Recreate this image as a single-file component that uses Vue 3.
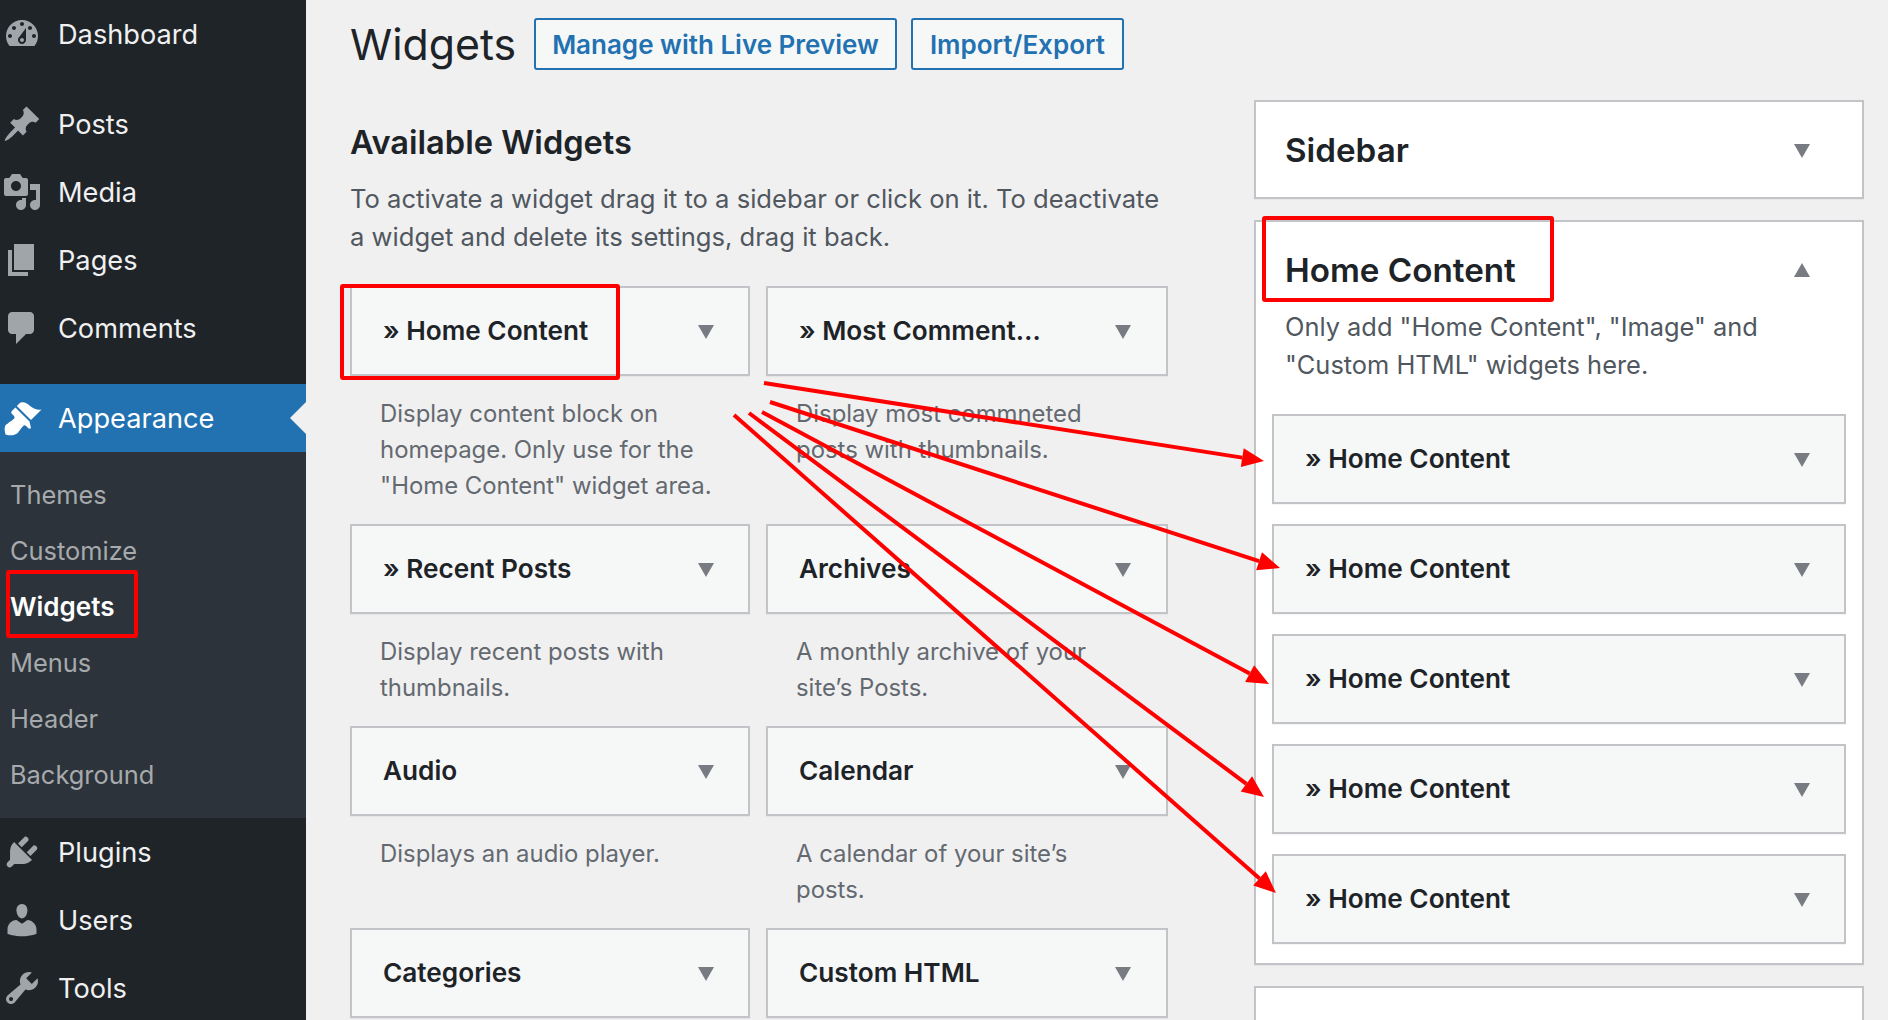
<script setup>
const ICONS = {
  dashboard: 'M3.76 16h12.48c1.1-1.37 1.76-3.11 1.76-5 0-4.42-3.58-8-8-8s-8 3.58-8 8c0 1.89.66 3.63 1.76 5zM10 4c.55 0 1 .45 1 1s-.45 1-1 1-1-.45-1-1 .45-1 1-1zM6 6c.55 0 1 .45 1 1s-.45 1-1 1-1-.45-1-1 .45-1 1-1zm8 0c.55 0 1 .45 1 1s-.45 1-1 1-1-.45-1-1 .45-1 1-1zm-5.37 5.55L12 7v6c0 1.1-.9 2-2 2s-2-.9-2-2c0-.57.24-1.08.63-1.45zM4 10c.55 0 1 .45 1 1s-.45 1-1 1-1-.45-1-1 .45-1 1-1zm12 0c.55 0 1 .45 1 1s-.45 1-1 1-1-.45-1-1 .45-1 1-1zm-5 3c0-.55-.45-1-1-1s-1 .45-1 1 .45 1 1 1 1-.45 1-1z',
  post: 'M10.44 3.02l1.82-1.82 6.36 6.35-1.83 1.82c-1.05-.68-2.48-.57-3.41.36l-.75.75c-.92.93-1.04 2.35-.35 3.41l-1.83 1.82-2.41-2.41-2.8 2.79c-.42.42-3.38 2.71-3.8 2.29s1.86-3.39 2.28-3.81l2.79-2.79L4.1 9.36l1.83-1.82c1.05.69 2.48.57 3.4-.36l.75-.75c.93-.92 1.05-2.35.36-3.41z',
  media: 'M13 11V4c0-.55-.45-1-1-1h-1.67L9 1H5L3.67 3H2c-.55 0-1 .45-1 1v7c0 .55.45 1 1 1h10c.55 0 1-.45 1-1zM7 4.5c1.38 0 2.5 1.12 2.5 2.5S8.38 9.5 7 9.5 4.5 8.38 4.5 7 5.62 4.5 7 4.5zM14 6h5v10.5c0 1.38-1.12 2.5-2.5 2.5S14 17.88 14 16.5s1.12-2.5 2.5-2.5c.17 0 .34.02.5.05V9h-3V6zm-4 8.05V13h2v3.5c0 1.38-1.12 2.5-2.5 2.5S7 17.88 7 16.5 8.12 14 9.5 14c.17 0 .34.02.5.05z',
  page: 'M6 15V2h10v13H6zm-1 1h8v2H3V5h2v11z',
  comments: 'M5 2h9c1.1 0 2 .9 2 2v7c0 1.1-.9 2-2 2h-2l-5 5v-5H5c-1.1 0-2-.9-2-2V4c0-1.1.9-2 2-2z',
  appearance: 'M14.48 11.06L7.41 3.99l1.5-1.5c.5-.56 2.3-.47 3.51.32 1.21.8 1.43 1.28 2.91 2.1 1.18.64 2.45 1.26 4.45.85zm-.71.71L6.7 4.7 4.93 6.47c-.39.39-.39 1.02 0 1.41l1.06 1.06c.39.39.39 1.03 0 1.42-.6.6-1.43 1.11-2.21 1.69-.35.26-.7.53-1.01.84C1.43 13.23.91 15.24 1.76 18.2c2.96.85 4.97.33 6.31-1.01.31-.31.58-.66.84-1.01.58-.78 1.09-1.61 1.69-2.21.39-.39 1.03-.39 1.42 0l1.06 1.06c.39.39 1.02.39 1.41 0z',
  plugins: 'M13.11 4.36L9.87 7.6 8 5.73l3.24-3.24c.35-.34 1.05-.2 1.56.32.52.51.66 1.21.31 1.55zm-8 1.77l.91-1.12 9.01 9.01-1.19.84c-.71.71-2.63 1.16-3.82 1.16H6.14L4.9 17.26c-.59.59-1.54.59-2.12 0-.59-.58-.59-1.53 0-2.12l1.24-1.24v-3.88c0-1.13.4-3.19 1.09-3.89zm7.26 3.97l3.24-3.24c.34-.35 1.04-.21 1.55.31.52.51.66 1.21.31 1.55l-3.24 3.25z',
  users: 'M10 9.25c-2.27 0-2.73-3.44-2.73-3.44C7 4.02 7.82 2 9.97 2c2.16 0 2.98 2.02 2.71 3.81 0 0-.41 3.44-2.68 3.44zm0 2.57L12.72 10c2.39 0 4.52 2.33 4.52 4.53v2.49s-3.65 1.13-7.24 1.13c-3.65 0-7.24-1.13-7.24-1.13v-2.49c0-2.25 1.94-4.48 4.47-4.48z',
  tools: 'M16.68 9.77c-1.34 1.34-3.3 1.67-4.95.99l-5.41 6.52c-.99.99-2.59.99-3.58 0s-.99-2.59 0-3.57l6.52-5.42c-.68-1.65-.35-3.61.99-4.95 1.28-1.28 3.12-1.62 4.72-1.06l-2.89 2.89 2.82 2.82 2.86-2.87c.53 1.58.18 3.39-1.08 4.65zM3.81 16.21c.4.39 1.04.39 1.43 0 .4-.4.4-1.04 0-1.43-.39-.4-1.03-.4-1.43 0-.39.39-.39 1.03 0 1.43z',
}

const MENU_TOP = [
  { label: 'Dashboard', icon: 'dashboard', sepAfter: true },
  { label: 'Posts', icon: 'post' },
  { label: 'Media', icon: 'media' },
  { label: 'Pages', icon: 'page' },
  { label: 'Comments', icon: 'comments', sepAfter: true },
]
const SUBMENU = ['Themes', 'Customize', 'Widgets', 'Menus', 'Header', 'Background']
const MENU_BOTTOM = [
  { label: 'Plugins', icon: 'plugins' },
  { label: 'Users', icon: 'users' },
  { label: 'Tools', icon: 'tools' },
]

const AVAILABLE = [
  { title: '» Home Content', desc: 'Display content block on homepage. Only use for the "Home Content" widget area.' },
  { title: '» Most Comment…', desc: 'Display most commneted posts with thumbnails.' },
  { title: '» Recent Posts', desc: 'Display recent posts with thumbnails.' },
  { title: 'Archives', desc: 'A monthly archive of your site’s Posts.' },
  { title: 'Audio', desc: 'Displays an audio player.' },
  { title: 'Calendar', desc: 'A calendar of your site’s posts.' },
  { title: 'Categories', desc: '' },
  { title: 'Custom HTML', desc: '' },
]

const HOME_WIDGETS = [1, 2, 3, 4, 5]

const BOXES = [
  { x: 8, y: 572, w: 128, h: 64 },
  { x: 342, y: 286, w: 276, h: 92 },
  { x: 1264, y: 218, w: 288, h: 82 },
]

// start and tip of each red arrow, the head is worked out from the direction
const ARROWS = [
  [764, 383, 1264, 461],
  [770, 402, 1280, 568],
  [762, 412, 1269, 684],
  [749, 413, 1264, 797],
  [734, 415, 1276, 893],
].map(([x1, y1, x2, y2]) => {
  const len = Math.hypot(x2 - x1, y2 - y1)
  const ux = (x2 - x1) / len
  const uy = (y2 - y1) / len
  const bx = x2 - ux * 22
  const by = y2 - uy * 22
  const head = [
    [x2, y2],
    [bx - uy * 9.5, by + ux * 9.5],
    [bx + uy * 9.5, by - ux * 9.5],
  ]
  return { x1, y1, x2: bx, y2: by, head: head.map((p) => p.join(',')).join(' ') }
})
</script>

<template>
  <div class="page">
    <aside class="adminmenu">
      <template v-for="item in MENU_TOP" :key="item.label">
        <div class="menu-item" :class="{ 'has-sep': item.sepAfter }">
          <svg class="menu-icon" viewBox="0 0 20 20"><path :d="ICONS[item.icon]" fill-rule="evenodd" /></svg>
          <span>{{ item.label }}</span>
        </div>
      </template>
      <div class="menu-item current">
        <svg class="menu-icon" viewBox="0 0 20 20"><path :d="ICONS.appearance" /></svg>
        <span>Appearance</span>
        <i class="notch"></i>
      </div>
      <ul class="submenu">
        <li v-for="sub in SUBMENU" :key="sub" :class="{ active: sub === 'Widgets' }">{{ sub }}</li>
      </ul>
      <div v-for="item in MENU_BOTTOM" :key="item.label" class="menu-item">
        <svg class="menu-icon" viewBox="0 0 20 20"><path :d="ICONS[item.icon]" /></svg>
        <span>{{ item.label }}</span>
      </div>
    </aside>

    <main class="content">
      <section class="available">
        <header class="page-head">
          <h1>Widgets</h1>
          <a class="btn">Manage with Live Preview</a>
          <a class="btn">Import/Export</a>
        </header>
        <h2>Available Widgets</h2>
        <p class="intro">To activate a widget drag it to a sidebar or click on it. To deactivate a widget and delete its settings, drag it back.</p>
        <div class="widget-grid">
          <div v-for="w in AVAILABLE" :key="w.title" class="widget-cell">
            <div class="widget">
              <span>{{ w.title }}</span>
              <i class="arrow"></i>
            </div>
            <p v-if="w.desc" class="widget-desc">{{ w.desc }}</p>
          </div>
        </div>
      </section>

      <section class="areas">
        <div class="area closed">
          <h3>Sidebar</h3>
          <i class="arrow"></i>
        </div>
        <div class="area open">
          <div class="area-head">
            <h3>Home Content</h3>
            <i class="arrow up"></i>
          </div>
          <p class="area-desc">Only add "Home Content", "Image" and "Custom HTML" widgets here.</p>
          <div class="area-widgets">
            <div v-for="n in HOME_WIDGETS" :key="n" class="widget wide">
              <span>» Home Content</span>
              <i class="arrow"></i>
            </div>
          </div>
        </div>
        <div class="area closed"></div>
      </section>
    </main>

    <svg class="marks" width="1888" height="1020" viewBox="0 0 1888 1020">
      <rect v-for="b in BOXES" :key="b.x" :x="b.x" :y="b.y" :width="b.w" :height="b.h" rx="1" fill="none" stroke="#ff0000" stroke-width="4" />
      <g v-for="a in ARROWS" :key="a.y1">
        <line :x1="a.x1" :y1="a.y1" :x2="a.x2" :y2="a.y2" stroke="#ff0000" stroke-width="4" />
        <polygon :points="a.head" fill="#ff0000" />
      </g>
    </svg>
  </div>
</template>

<style>
html, body {
  margin: 0;
  overflow: hidden;
}
</style>

<style scoped>
.page {
  position: relative;
  display: flex;
  width: 1888px;
  height: 1020px;
  overflow: hidden;
  background: #f0f0f1;
  font-family: Inter, "Noto Sans", sans-serif;
  color: #1d2327;
}

.adminmenu {
  width: 306px;
  flex-shrink: 0;
  background: #1f2429;
}

.menu-item {
  position: relative;
  display: flex;
  align-items: center;
  height: 68px;
  padding-left: 2px;
  font-size: 27.2px;
  color: #f0f0f1;
}

.menu-item.has-sep {
  margin-bottom: 22px;
}

.menu-icon {
  width: 40px;
  height: 40px;
  margin-right: 16px;
  fill: #a0a5aa;
  flex-shrink: 0;
}

.menu-item.current {
  background: #2271b1;
  color: #fff;
}

.menu-item.current .menu-icon {
  fill: #fff;
}

.notch {
  position: absolute;
  right: 0;
  top: 18px;
  border: 16px solid transparent;
  border-left-width: 0;
  border-right-color: #f0f0f1;
}

.submenu {
  margin: 0;
  padding: 25px 0 0 10px;
  height: 366px;
  box-sizing: border-box;
  list-style: none;
  background: #2c333a;
  display: flex;
  flex-direction: column;
  gap: 20px;
  font-size: 25.4px;
  color: #a7aaad;
}

.submenu li {
  height: 36px;
  line-height: 36px;
}

.submenu li.active {
  color: #fff;
  font-size: 26px;
  font-weight: 600;
}

.content {
  flex: 1;
  display: flex;
  gap: 86px;
  padding-left: 44px;
  min-width: 0;
}

.available {
  width: 818px;
  flex-shrink: 0;
  padding-top: 18px;
}

.page-head {
  display: flex;
  align-items: center;
  height: 52px;
}

h1 {
  margin: 0 18px 0 0;
  font-size: 42.8px;
  font-weight: 400;
}

.btn {
  display: flex;
  align-items: center;
  box-sizing: border-box;
  height: 52px;
  padding: 0 16px;
  margin-right: 14px;
  border: 2px solid #2271b1;
  border-radius: 3px;
  background: #f6f7f7;
  color: #2271b1;
  font-size: 26px;
  font-weight: 600;
}

.btn + .btn {
  padding: 0 17px;
}

h2 {
  margin: 52px 0 0;
  font-size: 32.6px;
  line-height: 41px;
  font-weight: 600;
}

.intro {
  margin: 17px 0 30px;
  font-size: 25.6px;
  line-height: 38px;
  color: #50575e;
}

.widget-grid {
  display: grid;
  grid-template-columns: 400px 402px;
  column-gap: 16px;
}

.widget-cell {
  min-width: 0;
}

.widget-cell:nth-child(even) .widget {
  padding-right: 35px;
}

.widget {
  display: flex;
  align-items: center;
  justify-content: space-between;
  box-sizing: border-box;
  height: 90px;
  padding: 0 34px 0 31px;
  border: 2px solid #c3c4c7;
  background: #f6f7f7;
  box-shadow: 0 1px 1px rgba(0, 0, 0, 0.04);
  font-size: 26.2px;
  font-weight: 600;
}

.widget span {
  margin-bottom: 2px;
}

.widget .arrow {
  margin-top: 2px;
}

.widget-desc {
  margin: 20px 30px 20px 30px;
  font-size: 23.9px;
  line-height: 36px;
  color: #646970;
}

.arrow {
  width: 0;
  height: 0;
  border-left: 8px solid transparent;
  border-right: 8px solid transparent;
  border-top: 14px solid #787c82;
  flex-shrink: 0;
}

.arrow.up {
  border-top: 0;
  border-bottom: 14px solid #787c82;
}

.areas {
  width: 610px;
  flex-shrink: 0;
  padding-top: 100px;
  display: flex;
  flex-direction: column;
  gap: 21px;
}

.area {
  flex-shrink: 0;
  box-sizing: border-box;
  border: 2px solid #c3c4c7;
  background: #fff;
  box-shadow: 0 1px 1px rgba(0, 0, 0, 0.04);
}

.area h3 {
  margin: 0;
  font-size: 33.2px;
  line-height: 44px;
  font-weight: 600;
}

.area.closed {
  display: flex;
  align-items: center;
  justify-content: space-between;
  height: 99px;
  padding: 0 52px 0 29px;
}

.area.closed .arrow {
  margin-top: 2px;
}

.area.open {
  padding: 26px 16px 19px;
}

.area-head {
  display: flex;
  align-items: center;
  justify-content: space-between;
  padding: 0 36px 0 13px;
}

.area-desc {
  margin: 16px 0 30px 13px;
  width: 500px;
  font-size: 25.4px;
  line-height: 38px;
  color: #50575e;
}

.area-widgets {
  display: flex;
  flex-direction: column;
  gap: 20px;
}

.marks {
  position: absolute;
  left: 0;
  top: 0;
  pointer-events: none;
}
</style>
